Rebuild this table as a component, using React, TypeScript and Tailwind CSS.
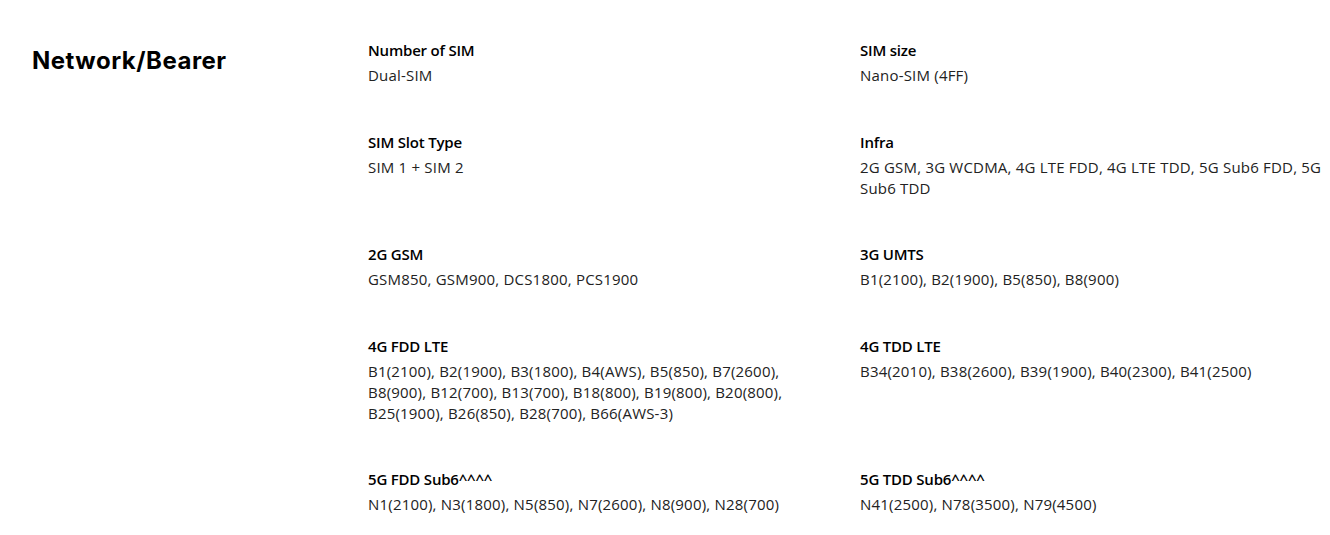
const specs: { title: string; value: string }[] = [
  { title: 'Number of SIM', value: 'Dual-SIM' },
  { title: 'SIM size', value: 'Nano-SIM (4FF)' },
  { title: 'SIM Slot Type', value: 'SIM 1 + SIM 2' },
  {
    title: 'Infra',
    value: '2G GSM, 3G WCDMA, 4G LTE FDD, 4G LTE TDD, 5G Sub6 FDD, 5G Sub6 TDD',
  },
  { title: '2G GSM', value: 'GSM850, GSM900, DCS1800, PCS1900' },
  { title: '3G UMTS', value: 'B1(2100), B2(1900), B5(850), B8(900)' },
  {
    title: '4G FDD LTE',
    value:
      'B1(2100), B2(1900), B3(1800), B4(AWS), B5(850), B7(2600), B8(900), B12(700), B13(700), B18(800), B19(800), B20(800), B25(1900), B26(850), B28(700), B66(AWS-3)',
  },
  {
    title: '4G TDD LTE',
    value: 'B34(2010), B38(2600), B39(1900), B40(2300), B41(2500)',
  },
  {
    title: '5G FDD Sub6^^^^',
    value: 'N1(2100), N3(1800), N5(850), N7(2600), N8(900), N28(700)',
  },
  { title: '5G TDD Sub6^^^^', value: 'N41(2500), N78(3500), N79(4500)' },
];

export default function App() {
  return (
    <div className="min-h-screen bg-white text-black font-['Open_Sans',sans-serif]">
      <div className="flex pl-8 pr-[5px] pt-10">
        <h2 className="w-[336px] shrink-0 pt-[6px] text-[24px] font-bold leading-[30px] tracking-[0.5px] font-['Inter',sans-serif]">
          Network/Bearer
        </h2>
        <div className="grid flex-1 grid-cols-2 gap-x-[27px] gap-y-[45.5px]">
          {specs.map((s) => (
            <div key={s.title}>
              <p className="text-[15px] font-semibold leading-5 tracking-[-0.2px]">{s.title}</p>
              <p className="mt-[5px] text-[15px] leading-[21px] tracking-[0.2px] text-[#222]">
                {s.value}
              </p>
            </div>
          ))}
        </div>
      </div>
    </div>
  );
}
